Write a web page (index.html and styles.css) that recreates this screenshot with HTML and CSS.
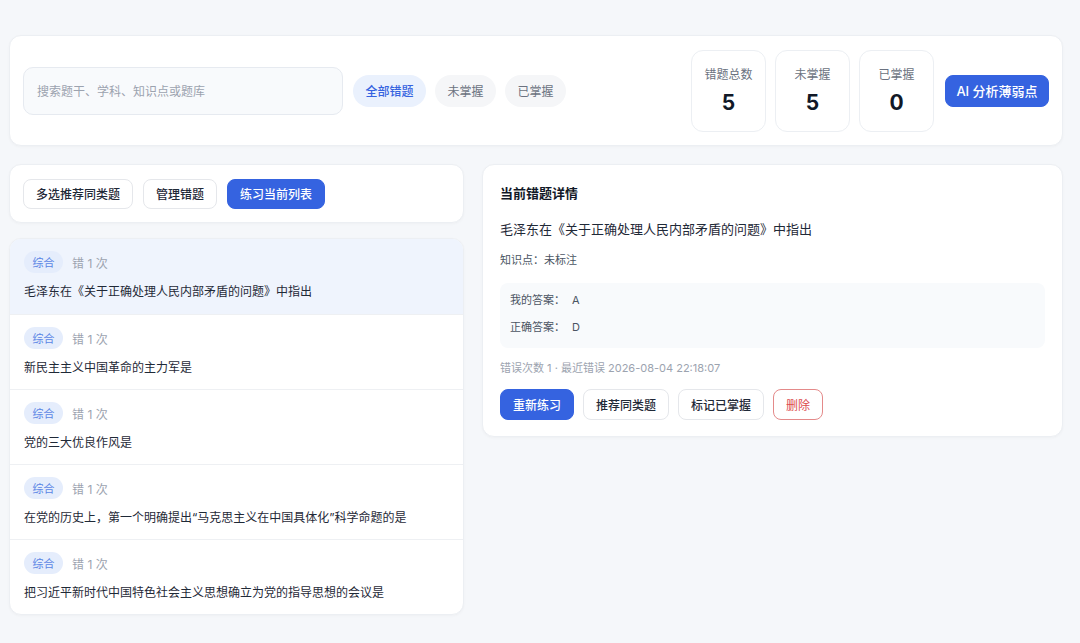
FILE: index.html
```html
<!DOCTYPE html>
<html lang="zh">
<head>
<meta charset="utf-8">
<link rel="stylesheet" href="styles.css">
</head>
<body>
<div class="page">
  <section class="card top">
    <div class="search">搜索题干、学科、知识点或题库</div>
    <div class="chips">
      <span class="chip active">全部错题</span>
      <span class="chip">未掌握</span>
      <span class="chip">已掌握</span>
    </div>
    <div class="spacer"></div>
    <div class="stats">
      <div class="stat"><div class="stat-label">错题总数</div><div class="stat-num">5</div></div>
      <div class="stat"><div class="stat-label">未掌握</div><div class="stat-num">5</div></div>
      <div class="stat"><div class="stat-label">已掌握</div><div class="stat-num">0</div></div>
    </div>
    <button class="btn primary ai">AI 分析薄弱点</button>
  </section>

  <div class="main">
    <div class="left">
      <section class="card toolbar">
        <button class="btn">多选推荐同类题</button>
        <button class="btn">管理错题</button>
        <button class="btn primary">练习当前列表</button>
      </section>
      <section class="card list">
        <div class="item selected">
          <div class="meta"><span class="tag">综合</span><span class="count">错 1 次</span></div>
          <div class="q">毛泽东在《关于正确处理人民内部矛盾的问题》中指出</div>
        </div>
        <div class="item">
          <div class="meta"><span class="tag">综合</span><span class="count">错 1 次</span></div>
          <div class="q">新民主主义中国革命的主力军是</div>
        </div>
        <div class="item">
          <div class="meta"><span class="tag">综合</span><span class="count">错 1 次</span></div>
          <div class="q">党的三大优良作风是</div>
        </div>
        <div class="item">
          <div class="meta"><span class="tag">综合</span><span class="count">错 1 次</span></div>
          <div class="q">在党的历史上，第一个明确提出“马克思主义在中国具体化”科学命题的是</div>
        </div>
        <div class="item">
          <div class="meta"><span class="tag">综合</span><span class="count">错 1 次</span></div>
          <div class="q">把习近平新时代中国特色社会主义思想确立为党的指导思想的会议是</div>
        </div>
      </section>
    </div>

    <section class="card detail">
      <h2 class="title">当前错题详情</h2>
      <div class="d-q">毛泽东在《关于正确处理人民内部矛盾的问题》中指出</div>
      <div class="kp">知识点：未标注</div>
      <div class="answers">
        <div class="ans"><span class="ans-label">我的答案：</span><span>A</span></div>
        <div class="ans"><span class="ans-label">正确答案：</span><span>D</span></div>
      </div>
      <div class="d-meta">错误次数 1 · 最近错误 2026-08-04 22:18:07</div>
      <div class="actions">
        <button class="btn primary">重新练习</button>
        <button class="btn">推荐同类题</button>
        <button class="btn">标记已掌握</button>
        <button class="btn danger">删除</button>
      </div>
    </section>
  </div>
</div>
</body>
</html>
```

FILE: styles.css
```css
* { box-sizing: border-box; }
html, body { margin: 0; padding: 0; }
body {
  background: #f5f7fa;
  font-family: "Inter", "Noto Sans CJK SC", sans-serif;
  color: #1f2937;
  width: 1080px;
  height: 643px;
  overflow: hidden;
}
.page {
  padding: 35px 17px 0 9px;
}
.card {
  background: #ffffff;
  border: 1px solid #eceff3;
  border-radius: 12px;
  box-shadow: 0 1px 3px rgba(15, 23, 42, 0.03);
}
.top {
  display: flex;
  align-items: center;
  height: 111px;
  padding: 0 13px;
}
.search {
  width: 320px;
  height: 48px;
  border: 1px solid #e6eaf0;
  background: #f8fafc;
  border-radius: 10px;
  display: flex;
  align-items: center;
  padding-left: 13px;
  font-size: 12px;
  color: #9ca3af;
}
.chips {
  display: flex;
  gap: 9px;
  margin-left: 10px;
}
.chip {
  height: 32px;
  padding: 0 12.5px;
  border-radius: 16px;
  background: #f5f6f8;
  color: #6b7280;
  font-size: 12px;
  display: flex;
  align-items: center;
}
.chip.active {
  background: #eaf1fd;
  color: #3563e0;
  font-weight: 500;
}
.spacer { flex: 1; }
.stats {
  display: flex;
  gap: 9px;
}
.stat {
  width: 75px;
  height: 82px;
  border: 1px solid #eceff3;
  border-radius: 12px;
  background: #fff;
  display: flex;
  flex-direction: column;
  align-items: center;
  padding-top: 16px;
}
.stat-label {
  font-size: 12px;
  color: #6b7280;
  line-height: 16px;
}
.stat-num {
  font-size: 21px;
  font-weight: 700;
  color: #111827;
  margin-top: 7px;
  line-height: 26px;
}
.btn {
  font-family: inherit;
  height: 30px;
  padding: 0 12px;
  border: 1px solid #e5e7eb;
  border-radius: 8px;
  background: #fff;
  color: #1f2937;
  font-size: 12px;
  font-weight: 500;
  cursor: pointer;
  display: inline-flex;
  align-items: center;
  justify-content: center;
}
.btn.primary {
  background: #3563e0;
  border-color: #3563e0;
  color: #fff;
}
.btn.danger {
  color: #dc4c4c;
  border-color: #e48a8a;
  font-weight: 400;
}
.ai {
  margin-left: 11px;
  height: 32px;
  width: 104px;
  padding: 0;
  font-size: 13px;
}
.main {
  display: flex;
  gap: 18px;
  margin-top: 18px;
  align-items: flex-start;
}
.left {
  width: 455px;
  display: flex;
  flex-direction: column;
  gap: 15px;
}
.toolbar {
  height: 59px;
  display: flex;
  align-items: center;
  gap: 10px;
  padding: 0 13px;
}
.list {
  overflow: hidden;
}
.item {
  height: 75px;
  padding: 11px 14px 0;
  border-top: 1px solid #eef0f3;
}
.item:first-child { border-top: none; }
.item.selected { background: #eff4fd; }
.meta {
  display: flex;
  align-items: center;
  gap: 9px;
  height: 24px;
}
.tag {
  height: 22px;
  padding: 0 8.5px;
  border-radius: 11px;
  background: #e5edfc;
  color: #5b86e5;
  font-size: 11px;
  display: flex;
  align-items: center;
}
.count {
  font-size: 12px;
  color: #9ca3af;
}
.q {
  margin-top: 8px;
  font-size: 12px;
  line-height: 20px;
  color: #1f2937;
}
.detail {
  flex: 1;
  padding: 18px 17px 16px;
}
.title {
  margin: 0;
  font-size: 13px;
  font-weight: 700;
  line-height: 20px;
  color: #111827;
}
.d-q {
  margin-top: 16px;
  font-size: 13px;
  line-height: 20px;
  color: #1f2937;
}
.kp {
  margin-top: 12px;
  font-size: 11px;
  line-height: 18px;
  color: #4b5563;
}
.answers {
  margin-top: 14px;
  background: #f8fafc;
  border-radius: 8px;
  padding: 4px 10px 7px;
}
.ans {
  font-size: 11px;
  line-height: 27px;
  color: #4b5563;
}
.ans-label { margin-right: 7px; }
.d-meta {
  margin-top: 10px;
  font-size: 11px;
  line-height: 20px;
  color: #9ca3af;
}
.actions {
  margin-top: 11px;
  display: flex;
  gap: 9px;
}
.actions .btn { height: 31px; }
```
